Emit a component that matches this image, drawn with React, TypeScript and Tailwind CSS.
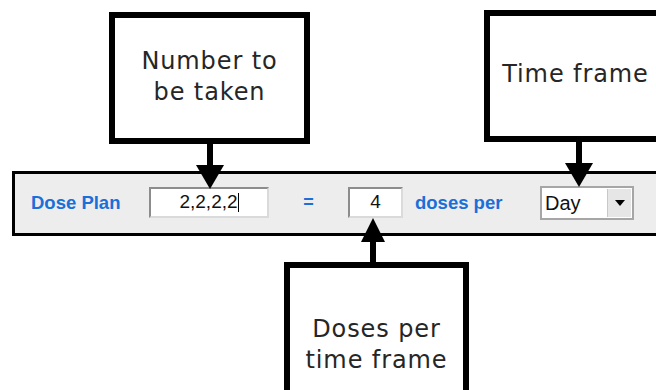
import React from "react";

const calloutFont = { fontFamily: '"DejaVu Sans", sans-serif' };
const formFont = { fontFamily: '"Liberation Sans", Arial, sans-serif' };

function ArrowDown({ className }: { className: string }) {
  return (
    <svg className={className} width="32" height="46" viewBox="0 0 32 46">
      <rect x="13" y="0" width="6" height="22" fill="#000" />
      <polygon points="2,21 30,21 16,45" fill="#000" />
    </svg>
  );
}

function ArrowUp({ className }: { className: string }) {
  return (
    <svg className={className} width="26" height="46" viewBox="0 0 26 46">
      <rect x="10" y="22" width="6" height="24" fill="#000" />
      <polygon points="1,24 25,24 13,0" fill="#000" />
    </svg>
  );
}

function Callout({ lines, className }: { lines: string[]; className: string }) {
  return (
    <div
      className={`relative shrink-0 border-[6px] border-black bg-white flex flex-col items-center justify-start text-[#262626] text-[24px] leading-[31px] tracking-[0.9px] ${className}`}
      style={calloutFont}
    >
      {lines.map((l) => (
        <span key={l}>{l}</span>
      ))}
    </div>
  );
}

export default function App() {
  return (
    <div className="relative w-[656px] h-[390px] overflow-hidden bg-white">
      {/* callouts above */}
      <div className="flex items-start h-[171px]">
        <div className="relative ml-[109px] mt-[12px]">
          <Callout lines={["Number to", "be taken"]} className="w-[201px] h-[132px] pt-[28px]" />
          <ArrowDown className="absolute left-[85px] top-full z-10" />
        </div>
        <div className="relative ml-[174px] mt-[10px]">
          <Callout lines={["Time frame"]} className="w-[189px] h-[132px] pt-[43px] pr-[6px]" />
          <ArrowDown className="absolute left-[79px] top-full z-10" />
        </div>
      </div>

      {/* form strip */}
      <div
        className="ml-[12px] w-[700px] h-[65px] border-[3px] border-black bg-[#ededed] flex items-center pb-[2px]"
        style={formFont}
      >
        <span className="w-[134px] pl-[16px] text-[18.5px] font-bold text-[#1b6fd8]">Dose Plan</span>
        <div className="w-[120px] h-[31px] bg-white border-2 border-t-[#8c8c8c] border-l-[#8c8c8c] border-r-[#dadada] border-b-[#dadada] flex items-center justify-center text-[19px] text-[#111]">
          <span>2,2,2,2</span>
          <span className="w-[1px] h-[19px] bg-black" />
        </div>
        <span className="w-[79px] text-center text-[18px] font-bold text-[#1b6fd8]">=</span>
        <div className="w-[55px] h-[31px] bg-white border-2 border-t-[#8c8c8c] border-l-[#8c8c8c] border-r-[#dadada] border-b-[#dadada] flex items-center justify-center text-[19px] text-[#111]">
          4
        </div>
        <span className="w-[137px] pl-[12px] text-[18.5px] font-bold text-[#1b6fd8]">doses per</span>
        <div className="w-[94px] h-[34px] bg-white border-2 border-[#a6a6a6] flex items-stretch">
          <span className="flex-1 flex items-center pl-[3px] text-[20px] text-[#111]">Day</span>
          <span className="w-[24px] my-[1px] mr-[1px] bg-[#e6e6e6] border-l border-[#c8c8c8] flex items-center justify-center">
            <svg width="10" height="6" viewBox="0 0 10 6">
              <polygon points="0,0 10,0 5,6" fill="#000" />
            </svg>
          </span>
        </div>
      </div>

      {/* callout below */}
      <div className="relative ml-[284px] mt-[26px] w-[185px]">
        <ArrowUp className="absolute left-[76px] bottom-full mb-[-2px] z-10" />
        <Callout lines={["Doses per", "time frame"]} className="w-[185px] h-[150px] pt-[46px] leading-[30px]" />
      </div>
    </div>
  );
}
